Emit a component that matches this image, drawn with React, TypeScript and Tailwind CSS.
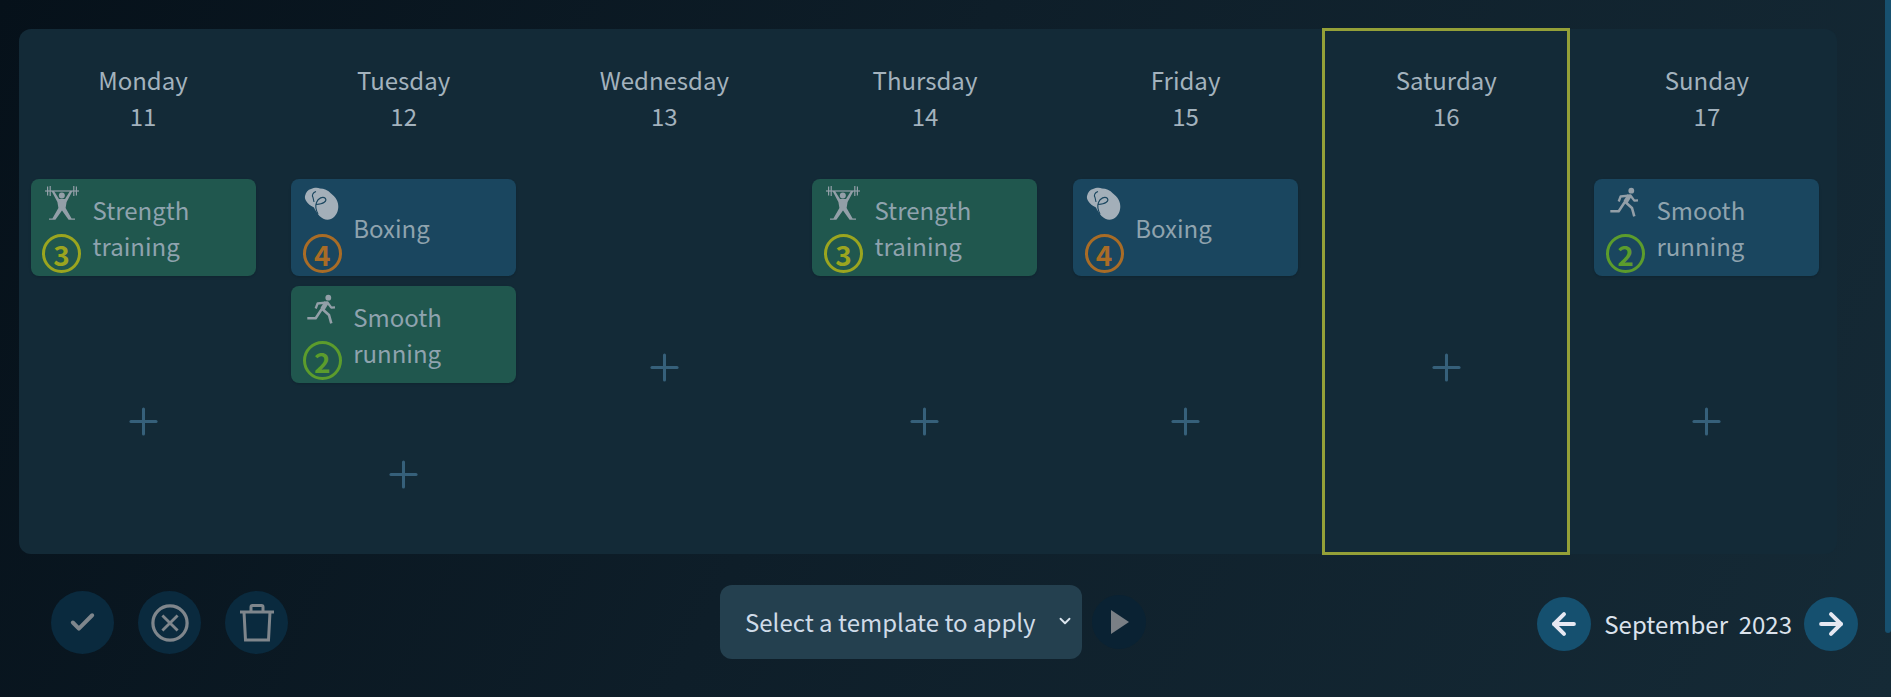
import { Check, ChevronDown, Plus, ArrowLeft, ArrowRight } from "lucide-react";

type Session = { name: string[]; icon: "lift" | "box" | "run"; level: number; color: "green" | "blue" };
type Day = { label: string; date: number; sessions: Session[]; today?: boolean };

const strength: Session = { name: ["Strength", "training"], icon: "lift", level: 3, color: "green" };
const boxing: Session = { name: ["Boxing"], icon: "box", level: 4, color: "blue" };

const days: Day[] = [
  { label: "Monday", date: 11, sessions: [strength] },
  { label: "Tuesday", date: 12, sessions: [boxing, { name: ["Smooth", "running"], icon: "run", level: 2, color: "green" }] },
  { label: "Wednesday", date: 13, sessions: [] },
  { label: "Thursday", date: 14, sessions: [strength] },
  { label: "Friday", date: 15, sessions: [boxing] },
  { label: "Saturday", date: 16, sessions: [], today: true },
  { label: "Sunday", date: 17, sessions: [{ name: ["Smooth", "running"], icon: "run", level: 2, color: "blue" }] },
];

function LiftIcon() {
  return (
    <svg viewBox="0 0 36 38" className="h-[38px] w-[36px]" fill="#939fa8">
      <rect x="1" y="5.4" width="34" height="1.2" />
      <rect x="3" y="1.5" width="1.2" height="9" />
      <rect x="5.6" y="1" width="1.2" height="10" />
      <rect x="29.2" y="1" width="1.2" height="10" />
      <rect x="31.8" y="1.5" width="1.2" height="9" />
      <circle cx="17.8" cy="10.6" r="3" />
      <path d="M7.5 6 L10 6 L15 14 L21 14 L26 6 L28.5 6 L22.6 17 L21.6 23 L27.6 33.4 L31 33.4 L31 34.8 L24.6 34.8 L18 25.5 L11.4 34.8 L5 34.8 L5 33.4 L8.4 33.4 L14.4 23 L13.4 17 Z" />
    </svg>
  );
}

function BoxIcon() {
  return (
    <svg viewBox="0 0 36 38" className="h-[38px] w-[36px]">
      <path d="M1 11 C2 7 4 4.5 7 4 C10 2.5 14 2.5 16 3.5 C20 3.5 24 5 27 8.5 C32 12 34.5 17 34.3 22 C34 28 31 32 27 34 C23 35.5 19 34.5 15.5 31 C13 28 11 25 10 22.5 C7 21 4 19 2.5 16.5 C1 14.5 0.7 12.5 1 11 Z" fill="#a3afb9" />
      <path d="M12 6.5 C9 7.5 7.5 10 9 12.5 L10 17 M14 29 C12 25 11 21 12.5 17.5 C14 13 19 11 21.5 13.5 C23 16 20 19 12 19.5" fill="none" stroke="#1a465f" strokeWidth="1.1" />
    </svg>
  );
}

function RunIcon() {
  return (
    <svg viewBox="0 0 36 38" className="h-[38px] w-[36px]" fill="none" stroke="#939fa8" strokeLinejoin="round">
      <circle cx="24.3" cy="5.7" r="2.9" fill="#939fa8" stroke="none" />
      <path d="M3.3 26.3 H11.7 L18.3 16.3" strokeWidth="2.5" />
      <path d="M18.5 17 L22.5 10.5" strokeWidth="4.6" />
      <path d="M11.7 16.5 L13.6 11.5 L23.3 10.3 L27.3 15.6 L31 15.4" strokeWidth="2.3" />
      <path d="M18.3 17 L25 23 L27.3 31.3" strokeWidth="2.6" />
    </svg>
  );
}

const levelClass: Record<number, string> = {
  2: "border-[#5c9c2c] text-[#5c9c2c]",
  3: "border-[#9ba51f] text-[#9ba51f]",
  4: "border-[#a96c26] text-[#a96c26]",
};

function SessionCard({ session }: { session: Session }) {
  return (
    <div className={`mb-[10px] flex h-[97px] items-center rounded-lg pl-3 shadow-sm ${session.color === "green" ? "bg-[#20574e]" : "bg-[#1a465f]"}`}>
      <div className="flex h-full w-[38px] flex-col items-center justify-between pt-[6px] pb-[3px]">
        {session.icon === "lift" && <LiftIcon />}
        {session.icon === "box" && <BoxIcon />}
        {session.icon === "run" && <RunIcon />}
        <div className={`flex h-[39px] w-[39px] shrink-0 items-center justify-center rounded-full border-[3px] text-[28px] font-semibold leading-none ${levelClass[session.level]}`}>
          {session.level}
        </div>
      </div>
      <div className="ml-3 text-[24px] leading-[36px] text-[#8fa3ae]">
        {session.name.map((line) => (
          <div key={line}>{line}</div>
        ))}
      </div>
    </div>
  );
}

function DayColumn({ day }: { day: Day }) {
  return (
    <div className={`flex w-[246px] flex-col ${day.today ? "outline-[3px] -outline-offset-2 outline outline-[#94a038]" : ""}`}>
      <div className="h-[150px] shrink-0 pt-[33px] text-center text-[24px] leading-[36px] text-[#a3b2bd]">
        <div>{day.label}</div>
        <div>{day.date}</div>
      </div>
      <div className="flex flex-col px-[10.5px]">
        {day.sessions.map((session) => (
          <SessionCard key={session.name[0]} session={session} />
        ))}
      </div>
      <div className="flex flex-1 items-center justify-center pt-[2px]">
        <Plus className="h-[43px] w-[43px] text-[#36607a]" strokeWidth={1.7} />
      </div>
    </div>
  );
}

function RoundButton({ children }: { children: React.ReactNode }) {
  return <div className="flex h-[63px] w-[63px] items-center justify-center rounded-full bg-[#0a2a3e]">{children}</div>;
}

export default function App() {
  return (
    <div
      className="flex h-[697px] w-full overflow-hidden bg-[linear-gradient(115deg,#06111a_0%,#0e1e29_45%,#152a36_100%)] text-white"
      style={{ fontFamily: '"Noto Sans CJK JP", "Noto Sans", sans-serif' }}
    >
      <div className="flex-1 pl-[19px] pt-[29px]">
        <div className="flex h-[525px] w-[1818px] justify-between rounded-xl bg-[#132a37] pl-[1px] pr-[7px]">
          {days.map((day) => (
            <DayColumn key={day.label} day={day} />
          ))}
        </div>

        <div className="flex items-start pl-[32px] pr-[27px] pt-[31px]">
          <div className="mt-[6px] flex gap-[24px]">
            <RoundButton>
              <Check className="h-[29px] w-[29px] text-[#7f868c]" strokeWidth={3.3} />
            </RoundButton>
            <RoundButton>
              <svg viewBox="0 0 40 40" className="h-[38px] w-[38px]" fill="none" stroke="#7f868c" strokeWidth="3.4">
                <circle cx="20" cy="20" r="18" />
                <path d="M12 12 L28 28 M28 12 L12 28" strokeWidth="3" />
              </svg>
            </RoundButton>
            <RoundButton>
              <svg viewBox="0 0 36 38" className="h-[38px] w-[36px]" fill="none" stroke="#7f868c" strokeWidth="3">
                <path d="M1 8 H35 M12 8 V3 Q12 1.5 13.5 1.5 H22.5 Q24 1.5 24 3 V8 M5 8 L6.5 36 H29.5 L31 8" />
              </svg>
            </RoundButton>
          </div>

          <div className="ml-[432px] flex items-center">
            <div className="flex h-[74px] w-[362px] items-center rounded-xl bg-[#24404f] pl-[25px] text-[24px] text-[#cfdbe8]">
              <span className="whitespace-nowrap">Select a template to apply</span>
              <ChevronDown className="ml-[20px] h-[18px] w-[18px] -translate-y-[1px] text-[#dce5ee]" strokeWidth={2.5} />
            </div>
            <div className="ml-[10px] flex h-[54px] w-[54px] items-center justify-center rounded-full bg-[#0a2233]">
              <svg viewBox="0 0 20 24" className="ml-[1px] h-[24px] w-[20px]" fill="#7a7f85">
                <path d="M1 0 L19 12 L1 24 Z" />
              </svg>
            </div>
          </div>

          <div className="ml-auto mt-[12px] flex items-center">
            <div className="flex h-[54px] w-[54px] items-center justify-center rounded-full bg-[#15506f]">
              <ArrowLeft className="h-[34px] w-[34px] text-[#e6e8f2]" strokeWidth={2.8} />
            </div>
            <span className="ml-[13px] mr-[12px] whitespace-pre text-[24px] leading-[36px] text-[#dbe2ec]">September  2023</span>
            <div className="flex h-[54px] w-[54px] items-center justify-center rounded-full bg-[#15506f]">
              <ArrowRight className="h-[34px] w-[34px] text-[#e6e8f2]" strokeWidth={2.8} />
            </div>
          </div>
        </div>
      </div>
      <div className="h-[633px] w-[6px] rounded-b bg-[#17506f]" />
    </div>
  );
}
